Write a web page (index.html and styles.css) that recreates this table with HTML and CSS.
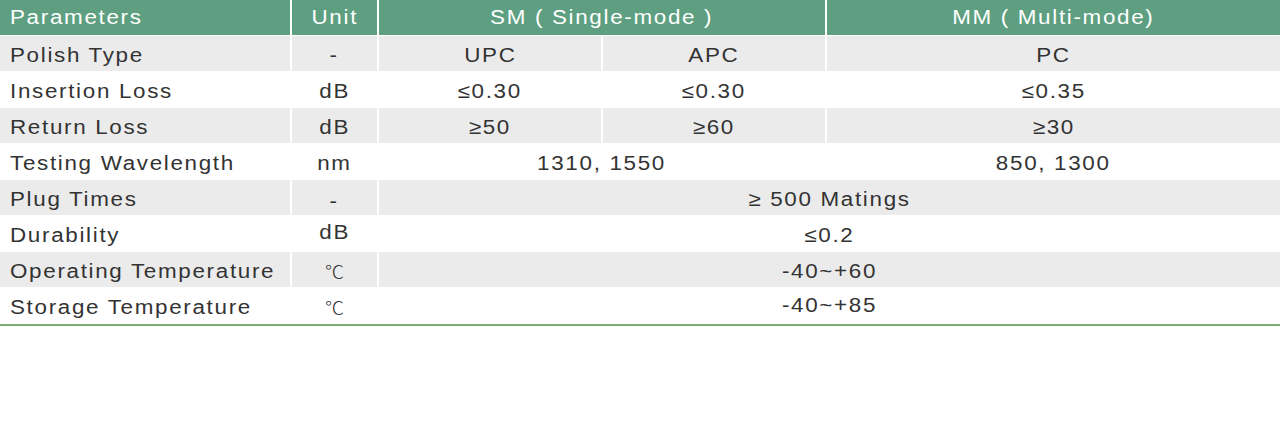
FILE: index.html
```html
<!DOCTYPE html>
<html lang="en">
<head>
<meta charset="utf-8">
<title>Connector Specifications</title>
<link rel="stylesheet" href="styles.css">
</head>
<body>
<div class="spec">
  <div class="cell head left"><span class="t">Parameters</span></div>
  <div class="cell head"><span class="t">Unit</span></div>
  <div class="cell head span2"><span class="t">SM ( Single-mode )</span></div>
  <div class="cell head"><span class="t">MM ( Multi-mode)</span></div>

  <div class="cell gray left"><span class="t">Polish Type</span></div>
  <div class="cell gray"><span class="t">-</span></div>
  <div class="cell gray"><span class="t">UPC</span></div>
  <div class="cell gray"><span class="t">APC</span></div>
  <div class="cell gray"><span class="t">PC</span></div>

  <div class="cell left"><span class="t">Insertion Loss</span></div>
  <div class="cell"><span class="t">dB</span></div>
  <div class="cell"><span class="t">≤0.30</span></div>
  <div class="cell"><span class="t">≤0.30</span></div>
  <div class="cell"><span class="t">≤0.35</span></div>

  <div class="cell gray left"><span class="t">Return Loss</span></div>
  <div class="cell gray"><span class="t">dB</span></div>
  <div class="cell gray"><span class="t">≥50</span></div>
  <div class="cell gray"><span class="t">≥60</span></div>
  <div class="cell gray"><span class="t">≥30</span></div>

  <div class="cell left"><span class="t">Testing Wavelength</span></div>
  <div class="cell"><span class="t">nm</span></div>
  <div class="cell span2"><span class="t">1310, 1550</span></div>
  <div class="cell"><span class="t">850, 1300</span></div>

  <div class="cell gray left"><span class="t">Plug Times</span></div>
  <div class="cell gray dash"><span class="t">-</span></div>
  <div class="cell gray span3"><span class="t">≥ 500 Matings</span></div>

  <div class="cell left"><span class="t">Durability</span></div>
  <div class="cell raised"><span class="t">dB</span></div>
  <div class="cell span3"><span class="t">≤0.2</span></div>

  <div class="cell gray left"><span class="t">Operating Temperature</span></div>
  <div class="cell gray unit-c"><span class="t">℃</span></div>
  <div class="cell gray span3"><span class="t">-40~+60</span></div>

  <div class="cell left"><span class="t">Storage Temperature</span></div>
  <div class="cell unit-c"><span class="t">℃</span></div>
  <div class="cell span3 raised-s"><span class="t">-40~+85</span></div>
</div>
</body>
</html>
```
FILE: styles.css
```css
html, body {
  margin: 0;
  padding: 0;
  background: #ffffff;
}

.spec {
  display: grid;
  grid-template-columns: 290px 85px 222px 222px 1fr;
  grid-auto-rows: 35px;
  column-gap: 2px;
  row-gap: 1px;
  padding-bottom: 1px;
  border-bottom: 2px solid #7aae70;
  background: #ffffff;
  font-family: "Liberation Sans", Arial, "Noto Sans CJK SC", sans-serif;
  font-size: 20px;
  letter-spacing: 1.5px;
  color: #333333;
}

.cell {
  line-height: 38px;
  text-align: center;
  white-space: nowrap;
  background: #ffffff;
}

.t {
  display: inline-block;
  transform: scaleX(1.12);
  transform-origin: center;
}

.left .t {
  transform-origin: left center;
}

.head {
  background: #5e9f81;
  color: #ffffff;
  line-height: 35px;
}

.gray {
  background: #ebebeb;
}

.left {
  text-align: left;
  padding-left: 10px;
}

.span2 {
  grid-column: span 2;
}

.span3 {
  grid-column: span 3;
}

.dash {
  line-height: 42px;
}

.raised {
  line-height: 32px;
}

.raised-s {
  line-height: 35px;
}

.unit-c {
  font-family: "Noto Sans CJK SC", sans-serif;
  font-size: 17px;
  letter-spacing: 0;
  font-weight: 300;
}
```
